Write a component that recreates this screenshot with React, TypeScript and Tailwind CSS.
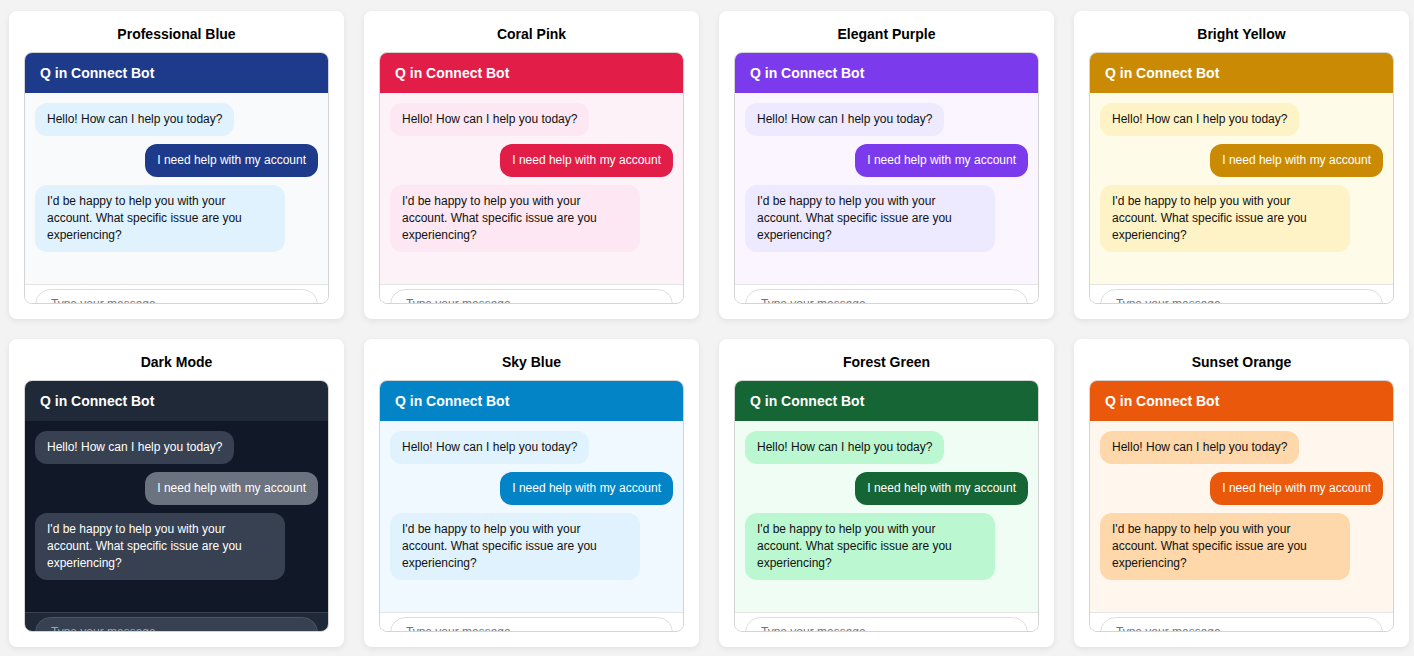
type Theme = {
  name: string;
  header: string;
  body: string;
  bot: string;
  user: string;
  footer: string;
  input: string;
};

const themes: Theme[] = [
  {
    name: 'Professional Blue',
    header: 'bg-[#1e3a8a]',
    body: 'bg-[#f8fafc]',
    bot: 'bg-[#e0f2fe] text-[#111]',
    user: 'bg-[#1e3a8a] text-white',
    footer: 'bg-white border-[#e5e5e5]',
    input: 'bg-white border-[#dddddd] placeholder:text-[#757575]',
  },
  {
    name: 'Coral Pink',
    header: 'bg-[#e11d48]',
    body: 'bg-[#fdf2f8]',
    bot: 'bg-[#fce7f3] text-[#111]',
    user: 'bg-[#e11d48] text-white',
    footer: 'bg-white border-[#e5e5e5]',
    input: 'bg-white border-[#dddddd] placeholder:text-[#757575]',
  },
  {
    name: 'Elegant Purple',
    header: 'bg-[#7c3aed]',
    body: 'bg-[#faf5ff]',
    bot: 'bg-[#ede9fe] text-[#111]',
    user: 'bg-[#7c3aed] text-white',
    footer: 'bg-white border-[#e5e5e5]',
    input: 'bg-white border-[#dddddd] placeholder:text-[#757575]',
  },
  {
    name: 'Bright Yellow',
    header: 'bg-[#ca8a04]',
    body: 'bg-[#fefce8]',
    bot: 'bg-[#fef3c7] text-[#111]',
    user: 'bg-[#ca8a04] text-white',
    footer: 'bg-white border-[#e5e5e5]',
    input: 'bg-white border-[#dddddd] placeholder:text-[#757575]',
  },
  {
    name: 'Dark Mode',
    header: 'bg-[#1f2937]',
    body: 'bg-[#111827]',
    bot: 'bg-[#374151] text-white',
    user: 'bg-[#6b7280] text-white',
    footer: 'bg-[#1f2937] border-[#374151]',
    input: 'bg-[#374151] border-[#4b5563] placeholder:text-[#9ca3af]',
  },
  {
    name: 'Sky Blue',
    header: 'bg-[#0284c7]',
    body: 'bg-[#f0f9ff]',
    bot: 'bg-[#e0f2fe] text-[#111]',
    user: 'bg-[#0284c7] text-white',
    footer: 'bg-white border-[#e5e5e5]',
    input: 'bg-white border-[#dddddd] placeholder:text-[#757575]',
  },
  {
    name: 'Forest Green',
    header: 'bg-[#166534]',
    body: 'bg-[#f0fdf4]',
    bot: 'bg-[#bbf7d0] text-[#111]',
    user: 'bg-[#166534] text-white',
    footer: 'bg-white border-[#e5e5e5]',
    input: 'bg-white border-[#dddddd] placeholder:text-[#757575]',
  },
  {
    name: 'Sunset Orange',
    header: 'bg-[#ea580c]',
    body: 'bg-[#fff7ed]',
    bot: 'bg-[#fed7aa] text-[#111]',
    user: 'bg-[#ea580c] text-white',
    footer: 'bg-white border-[#e5e5e5]',
    input: 'bg-white border-[#dddddd] placeholder:text-[#757575]',
  },
];

const ChatPreview = ({ t }: { t: Theme }) => (
  <div className="h-[252px] flex flex-col overflow-hidden rounded-lg border border-[#d4d4d4]">
    <div className={`${t.header} h-10 shrink-0 px-[15px] flex items-center text-white text-sm font-bold`}>
      Q in Connect Bot
    </div>
    <div className={`${t.body} h-[191px] shrink-0 p-[10px] flex flex-col gap-2`}>
      <div className={`${t.bot} self-start rounded-xl px-3 py-2 text-xs leading-[17px]`}>
        Hello! How can I help you today?
      </div>
      <div className={`${t.user} self-end rounded-xl px-3 py-2 text-xs leading-[17px]`}>
        I need help with my account
      </div>
      <div className={`${t.bot} self-start max-w-[250px] rounded-xl px-3 py-2 text-xs leading-[17px]`}>
        I'd be happy to help you with your account. What specific issue are you experiencing?
      </div>
    </div>
    <div className={`${t.footer} flex-1 border-t px-[10px] pt-1`}>
      <input
        readOnly
        placeholder="Type your message..."
        className={`${t.input} block w-full rounded-full border px-[15px] pt-[7px] pb-2 text-xs leading-[14px] outline-none`}
      />
    </div>
  </div>
);

export default function App() {
  return (
    <div
      className="min-h-screen bg-[#f3f3f3] pl-[9px] pr-[5px] pt-[11px] pb-5"
      style={{ fontFamily: '"Liberation Sans", Arial, sans-serif' }}
    >
      <div className="grid grid-cols-4 gap-5">
        {themes.map((t) => (
          <div key={t.name} className="bg-white rounded-lg shadow-[0_2px_6px_rgba(0,0,0,0.08)] p-[15px]">
            <h3 className="text-sm font-bold text-center text-black leading-4 mb-[10px]">{t.name}</h3>
            <ChatPreview t={t} />
          </div>
        ))}
      </div>
    </div>
  );
}
